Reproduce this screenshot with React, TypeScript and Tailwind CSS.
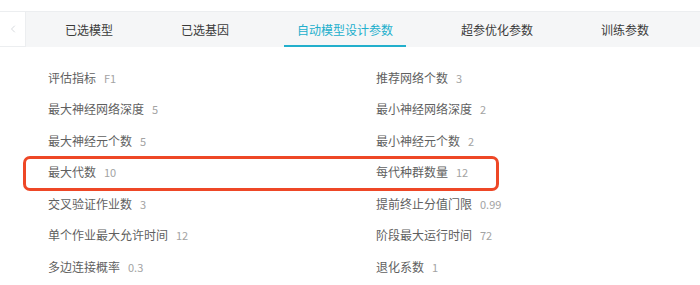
import { ChevronLeft } from "lucide-react";

const tabs = ["已选模型", "已选基因", "自动模型设计参数", "超参优化参数", "训练参数"];
const activeTab = 2;

const left = [
  ["评估指标", "F1"],
  ["最大神经网络深度", "5"],
  ["最大神经元个数", "5"],
  ["最大代数", "10"],
  ["交叉验证作业数", "3"],
  ["单个作业最大允许时间", "12"],
  ["多边连接概率", "0.3"],
];

const right = [
  ["推荐网络个数", "3"],
  ["最小神经网络深度", "2"],
  ["最小神经元个数", "2"],
  ["每代种群数量", "12"],
  ["提前终止分值门限", "0.99"],
  ["阶段最大运行时间", "72"],
  ["退化系数", "1"],
];

function Param({ label, value }: { label: string; value: string }) {
  return (
    <div className="flex h-[31.5px] items-center">
      <span className="text-[12px] text-[#5f5f5f]">{label}</span>
      <span className="ml-[8px] text-[11px] text-[#a3a3a3]">{value}</span>
    </div>
  );
}

export default function App() {
  return (
    <div
      className="relative h-[285px] w-[700px] overflow-hidden bg-white pt-[11px]"
      style={{ fontFamily: '"Noto Sans CJK SC", "Liberation Sans", sans-serif' }}
    >
      <div className="flex h-[36px] border-t border-[#eceef0] bg-[#f5f6f7]">
        <div className="flex w-[26px] items-center justify-center border-r border-b border-[#eceef0] bg-white text-[#c8ccd2]">
          <ChevronLeft size={12} strokeWidth={1.5} />
        </div>
        <div className="flex pl-[26px] gap-[42px]">
          {tabs.map((t, i) => (
            <div
              key={t}
              className={
                i === activeTab
                  ? "flex h-full items-center border-b-2 border-[#22afcc] px-[13px] pt-[2px] text-[12px] text-[#22afcc]"
                  : "flex h-full items-center border-b-2 border-transparent px-[13px] pt-[2px] text-[12px] text-[#3a3a3a]"
              }
            >
              {t}
            </div>
          ))}
        </div>
      </div>

      <div className="grid grid-cols-[328px_1fr] pl-[48px] pt-[15px]">
        <div className="flex flex-col">
          {left.map(([l, v]) => (
            <Param key={l} label={l} value={v} />
          ))}
        </div>
        <div className="flex flex-col">
          {right.map(([l, v]) => (
            <Param key={l} label={l} value={v} />
          ))}
        </div>
      </div>

      {/* highlight annotation */}
      <div className="absolute left-[23px] top-[156px] h-[35px] w-[476px] rounded-[7px] border-[3px] border-[#ee4726]" />
    </div>
  );
}
